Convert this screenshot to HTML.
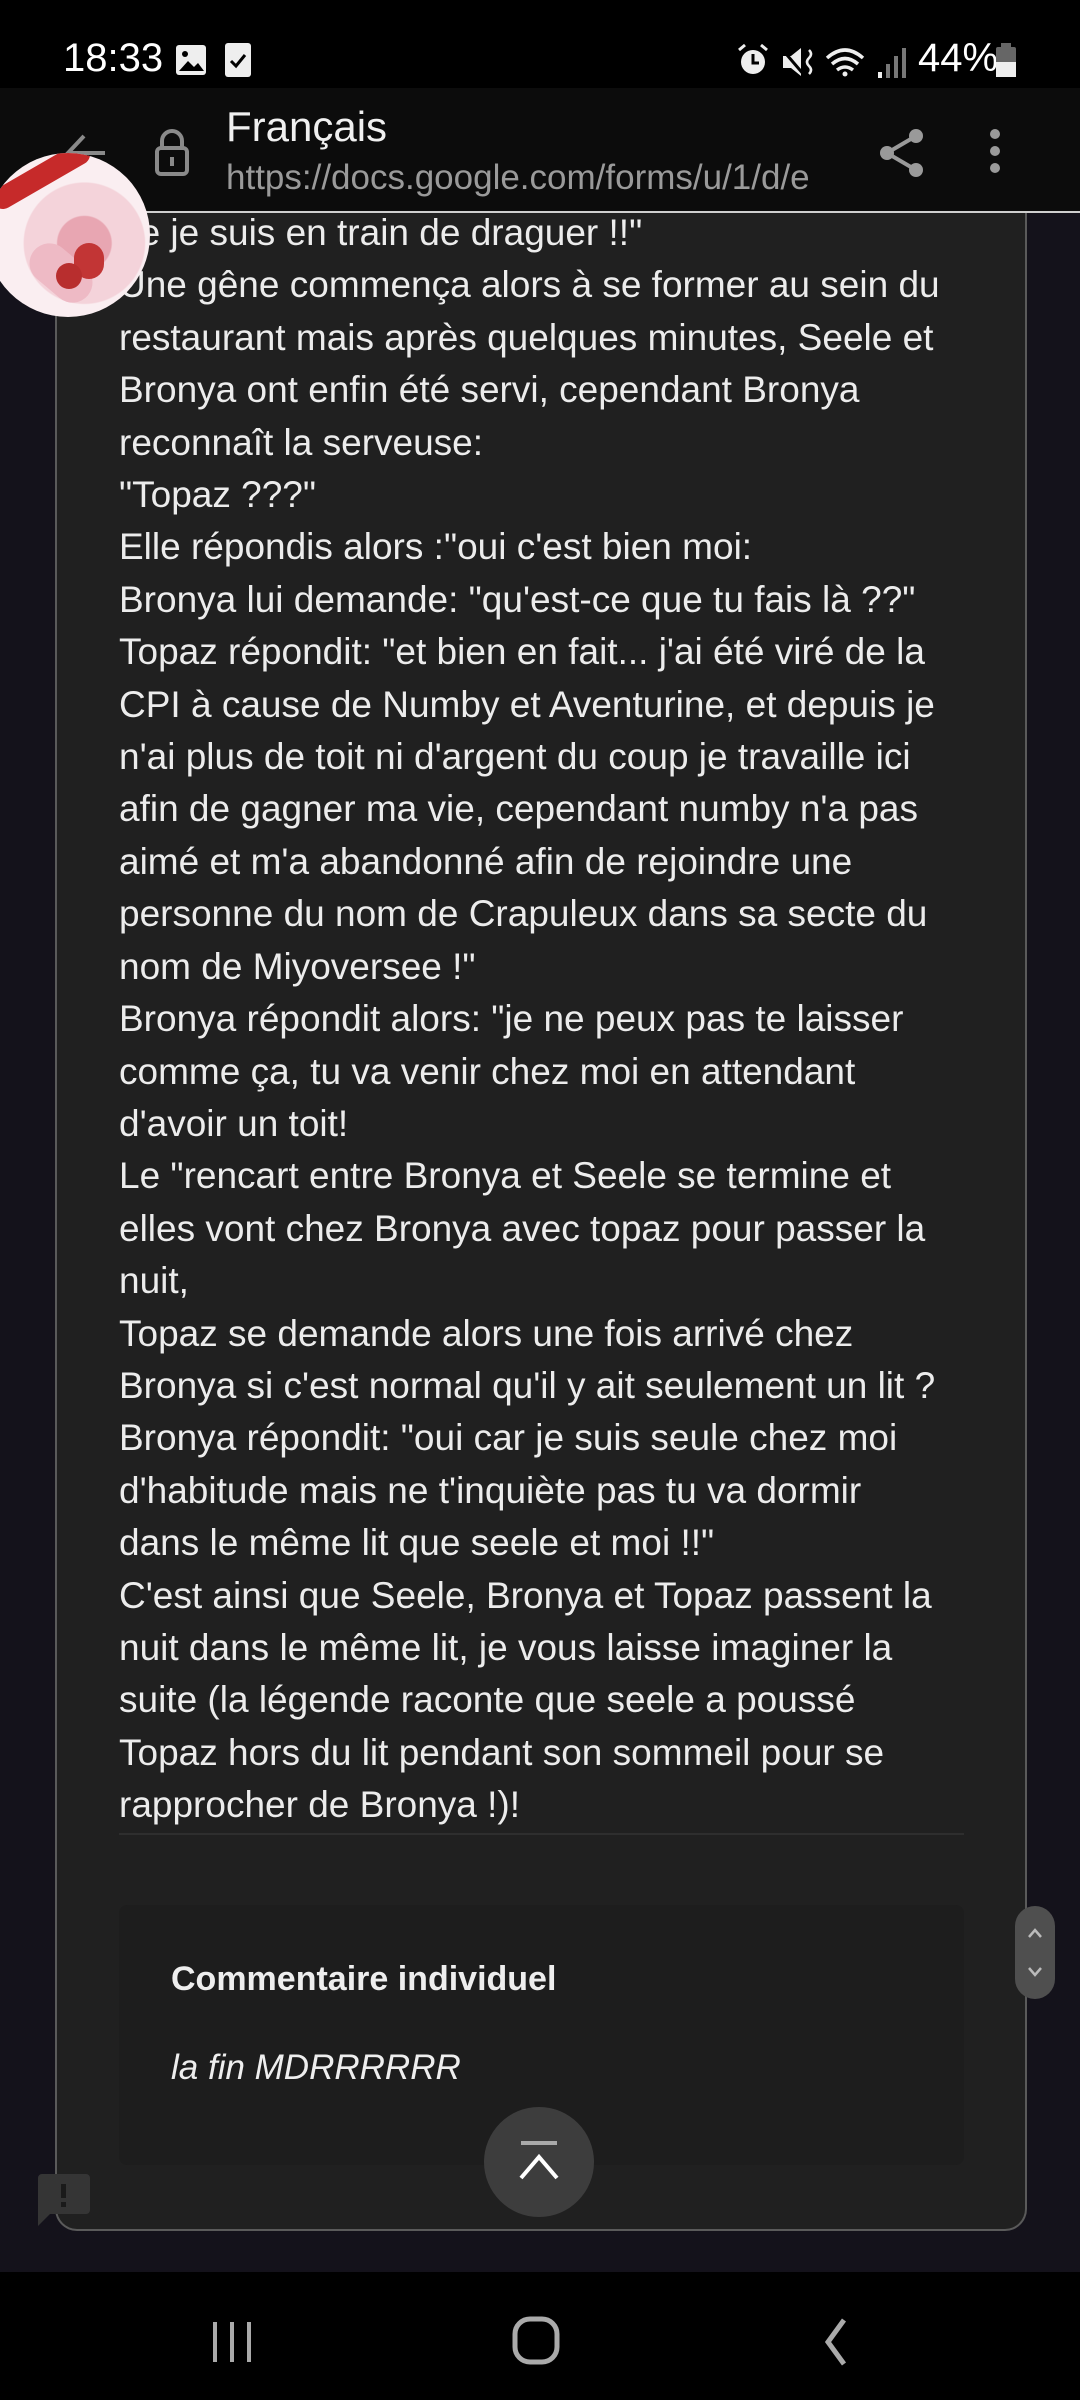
<!DOCTYPE html>
<html><head><meta charset="utf-8">
<style>
*{margin:0;padding:0;box-sizing:border-box}
html,body{width:1080px;height:2400px;overflow:hidden;background:#14121b;font-family:"Liberation Sans",sans-serif}
.status{position:absolute;left:0;top:0;width:1080px;height:88px;background:#000;color:#fff}
.toolbar{position:absolute;left:0;top:88px;width:1080px;height:125px;background:#0c0c0c;border-bottom:2px solid #cfcfcf}
.card{position:absolute;left:55px;top:213px;width:972px;height:2018px;background:#202020;border:2px solid #5a5a5a;border-top:none;border-radius:0 0 22px 22px}
.text{position:absolute;left:119px;top:207px;width:900px;color:#ececec;font-size:37px;line-height:52.4px;white-space:nowrap}
.div{position:absolute;left:119px;top:1833px;width:845px;height:2px;background:#2e2e2e}
.cbox{position:absolute;left:119px;top:1905px;width:845px;height:260px;background:#1d1d1d;border-radius:8px}
.nav{position:absolute;left:0;top:2272px;width:1080px;height:128px;background:#000}
</style></head><body>
<div class="status">
 <div style="position:absolute;left:63px;top:36px;font-size:40px;color:#fff">18:33</div>
 <div style="position:absolute;left:176px;top:45px;width:30px;height:30px;background:#eee;border-radius:3px"><svg width="30" height="30"><circle cx="9" cy="9" r="3" fill="#000"/><path d="M3 26 L12 16 L18 22 L22 18 L28 26Z" fill="#000"/></svg></div>
 <div style="position:absolute;left:225px;top:43px;width:26px;height:34px;background:#eee;border-radius:3px"><svg width="26" height="34"><path d="M6 18 L11 23 L20 12" stroke="#000" stroke-width="3" fill="none"/></svg></div>
 <svg style="position:absolute;left:735px;top:42px" width="300" height="40">
  <circle cx="18" cy="20" r="12" fill="#eee"/><path d="M18 12 V21 H24" stroke="#000" stroke-width="3" fill="none"/><path d="M4 8 L10 3 M32 8 L26 3" stroke="#eee" stroke-width="3"/>
  <path d="M48 14 H56 L66 6 V34 L56 26 H48Z" fill="#eee"/><path d="M46 6 L70 34" stroke="#000" stroke-width="3"/><path d="M74 8 q4 4 0 8 q-4 4 0 8 q4 4 0 8" stroke="#eee" stroke-width="2.5" fill="none"/>
  <path d="M92 16 q18 -16 36 0 M97 22 q13 -11 26 0 M102 28 q8 -6 16 0" stroke="#eee" stroke-width="3.5" fill="none"/><circle cx="110" cy="32" r="2.5" fill="#eee"/>
  <rect x="143" y="30" width="4" height="6" fill="#eee"/><rect x="151" y="22" width="4" height="14" fill="#777"/><rect x="159" y="14" width="4" height="22" fill="#777"/><rect x="167" y="6" width="4" height="30" fill="#777"/>
 </svg>
 <div style="position:absolute;left:918px;top:36px;font-size:40px;color:#fff">44%</div>
 <div style="position:absolute;left:996px;top:47px;width:20px;height:30px;background:#666;border-radius:2px"><div style="position:absolute;bottom:0;left:0;width:20px;height:15px;background:#eee"></div></div>
 <div style="position:absolute;left:1001px;top:43px;width:10px;height:5px;background:#666"></div>
</div>
<div class="toolbar">
 <svg style="position:absolute;left:60px;top:40px" width="50" height="50"><path d="M45 25 H8 M24 8 L8 25 L24 42" stroke="#8a8a8a" stroke-width="4" fill="none"/></svg>
 <svg style="position:absolute;left:152px;top:40px" width="40" height="50"><path d="M10 20 V13 a10 10 0 0 1 20 0 V20" stroke="#8a8a8a" stroke-width="4" fill="none"/><rect x="5" y="20" width="30" height="26" rx="4" stroke="#8a8a8a" stroke-width="4" fill="none"/><rect x="18" y="29" width="4" height="9" fill="#8a8a8a"/></svg>
 <div style="position:absolute;left:226px;top:15px;font-size:42px;color:#f0f0f0">Français</div>
 <div style="position:absolute;left:226px;top:70px;width:612px;overflow:hidden;white-space:nowrap;font-size:35px;color:#9a9a9a">https://docs.google.com/forms/u/1/d/e</div>
 <svg style="position:absolute;left:878px;top:40px" width="50" height="50"><circle cx="9" cy="25" r="7" fill="#9a9a9a"/><circle cx="38" cy="8" r="7" fill="#9a9a9a"/><circle cx="38" cy="42" r="7" fill="#9a9a9a"/><path d="M9 25 L38 8 M9 25 L38 42" stroke="#9a9a9a" stroke-width="4"/></svg>
 <svg style="position:absolute;left:985px;top:38px" width="20" height="56"><circle cx="10" cy="8" r="5" fill="#9a9a9a"/><circle cx="10" cy="25" r="5" fill="#9a9a9a"/><circle cx="10" cy="42" r="5" fill="#9a9a9a"/></svg>
</div>
<div class="card"></div>
<div class="text">ue je suis en train de draguer !!"<br>Une gêne commença alors à se former au sein du<br>restaurant mais après quelques minutes, Seele et<br>Bronya ont enfin été servi, cependant Bronya<br>reconnaît la serveuse:<br>"Topaz ???"<br>Elle répondis alors :"oui c'est bien moi:<br>Bronya lui demande: "qu'est-ce que tu fais là ??"<br>Topaz répondit: "et bien en fait... j'ai été viré de la<br>CPI à cause de Numby et Aventurine, et depuis je<br>n'ai plus de toit ni d'argent du coup je travaille ici<br>afin de gagner ma vie, cependant numby n'a pas<br>aimé et m'a abandonné afin de rejoindre une<br>personne du nom de Crapuleux dans sa secte du<br>nom de Miyoversee !"<br>Bronya répondit alors: "je ne peux pas te laisser<br>comme ça, tu va venir chez moi en attendant<br>d'avoir un toit!<br>Le "rencart entre Bronya et Seele se termine et<br>elles vont chez Bronya avec topaz pour passer la<br>nuit,<br>Topaz se demande alors une fois arrivé chez<br>Bronya si c'est normal qu'il y ait seulement un lit ?<br>Bronya répondit: "oui car je suis seule chez moi<br>d'habitude mais ne t'inquiète pas tu va dormir<br>dans le même lit que seele et moi !!"<br>C'est ainsi que Seele, Bronya et Topaz passent la<br>nuit dans le même lit, je vous laisse imaginer la<br>suite (la légende raconte que seele a poussé<br>Topaz hors du lit pendant son sommeil pour se<br>rapprocher de Bronya !)!</div>
<div class="div"></div>
<div class="cbox">
 <div style="position:absolute;left:52px;top:55px;font-size:34px;font-weight:bold;color:#eee">Commentaire individuel</div>
 <div style="position:absolute;left:52px;top:143px;font-size:35px;font-style:italic;color:#eee">la fin MDRRRRRR</div>
</div>
<div style="position:absolute;left:484px;top:2107px;width:110px;height:110px;border-radius:55px;background:#3d3d3d"></div>
<svg style="position:absolute;left:514px;top:2140px" width="50" height="45"><path d="M7 3 H43" stroke="#aaa" stroke-width="4"/><path d="M7 38 L25 17 L43 38" stroke="#fff" stroke-width="4" fill="none"/></svg>
<div style="position:absolute;left:1015px;top:1906px;width:40px;height:93px;border-radius:20px;background:#4f4f4f"></div>
<svg style="position:absolute;left:1025px;top:1925px" width="20" height="55"><path d="M4 12 L10 5 L16 12 M4 43 L10 50 L16 43" stroke="#bbb" stroke-width="2.5" fill="none"/></svg>
<svg style="position:absolute;left:36px;top:2172px" width="56" height="60"><path d="M2 6 a4 4 0 0 1 4 -4 H50 a4 4 0 0 1 4 4 V38 a4 4 0 0 1 -4 4 H14 L2 54Z" fill="#353535"/><rect x="25" y="12" width="5" height="14" fill="#1a1a1a"/><rect x="25" y="30" width="5" height="5" fill="#1a1a1a"/></svg>
<div style="position:absolute;left:-14px;top:153px;width:164px;height:164px;border-radius:82px;overflow:hidden;background:radial-gradient(circle at 60% 55%,#e8a6b2 0 20%,#f4d3da 21% 45%,#faeef1 46%)">
 <div style="position:absolute;left:0;top:12px;width:110px;height:22px;background:#c62a2a;transform:rotate(-30deg);border-radius:11px"></div>
 <div style="position:absolute;left:40px;top:100px;width:70px;height:40px;background:#eebac5;border-radius:30px;transform:rotate(40deg)"></div>
 <div style="position:absolute;left:88px;top:90px;width:30px;height:36px;background:#c23535;border-radius:15px"></div>
 <div style="position:absolute;left:70px;top:110px;width:26px;height:26px;background:#b82e2e;border-radius:13px"></div>
</div>
<div class="nav">
 <svg style="position:absolute;left:210px;top:48px" width="48" height="44"><rect x="3" y="2" width="4" height="40" fill="#aaa"/><rect x="20" y="2" width="4" height="40" fill="#aaa"/><rect x="37" y="2" width="4" height="40" fill="#aaa"/></svg>
 <svg style="position:absolute;left:512px;top:44px" width="48" height="50"><rect x="3" y="3" width="42" height="43" rx="15" stroke="#aaa" stroke-width="5" fill="none"/></svg>
 <svg style="position:absolute;left:822px;top:45px" width="30" height="50"><path d="M22 3 L6 25 L22 47" stroke="#aaa" stroke-width="5" fill="none"/></svg>
</div>
</body></html>
